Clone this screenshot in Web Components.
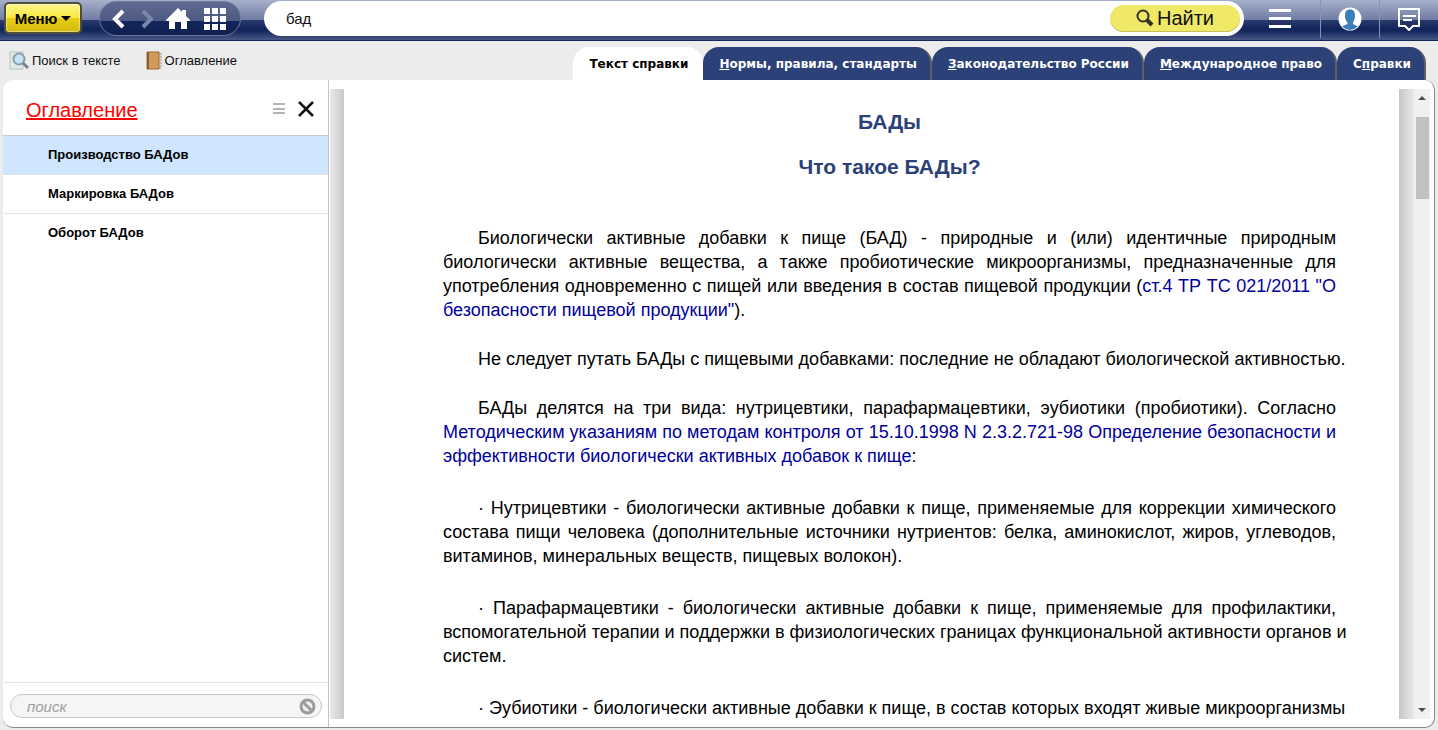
<!DOCTYPE html>
<html lang="ru">
<head>
<meta charset="utf-8">
<title>Оглавление</title>
<style>
html, body { margin: 0; height: 100%; }
body { background: #ececec; font-family: "Liberation Sans", Arial, sans-serif; color: #000; overflow: hidden; }
</style>
</head>
<body>
<help-app></help-app>

<script>
const define = (name, html, init) => {
  const template = document.createElement('template');
  template.innerHTML = html;
  customElements.define(name, class extends HTMLElement {
    constructor() {
      super();
      this.attachShadow({ mode: 'open' }).append(template.content.cloneNode(true));
    }
    connectedCallback() { if (init) init.call(this, this.shadowRoot); }
  });
};

/* Top bar: menu, history buttons, search, account */
define('top-bar', `
<style>
:host { display: flex; align-items: flex-start; height: 40px; flex: none; border-bottom: 1px solid #14265a;
  background: linear-gradient(#a6b0ca 0, #6f7ca3 20px, #2b3b6d 20px, #11245a 29px, #14275c 31px, #4a5885 40px); }
button { font: inherit; border: 0; margin: 0; padding: 0; background: none; display: flex; align-items: center; justify-content: center; }
svg { display: block; }
.menu { box-sizing: border-box; width: 78px; height: 32px; margin: 2px 17px 0 4px; gap: 4px; border: 2px solid #4f4f3c; border-radius: 5px;
  font-size: 15px; font-weight: bold; background: linear-gradient(#fbf48a, #f9ea3c 50%, #e6cf14 50%, #d4b90f); box-shadow: inset 0 0 0 1px #fff6; }
.nav { box-sizing: border-box; display: flex; align-items: center; height: 35px; width: 142px; margin-top: 1px; padding: 0 14px 0 11px;
  justify-content: space-between; border: 1px solid #6c789c; border-radius: 18px; background: linear-gradient(#5e6a90, #4c5982 19px, #14265a 19px, #10214f 100%); }
form { flex: 1; box-sizing: border-box; display: flex; align-items: center; height: 35px; margin: 1px 0 0 23px; padding: 0 4px 0 22px; border-radius: 18px; background: #fff; }
input { flex: 1; min-width: 0; border: 0; outline: 0; padding: 0; background: none; font: 15px "Liberation Sans", Arial, sans-serif; color: #111; }
.find { width: 130px; height: 27px; border-radius: 14px; background: #f0e968; box-shadow: inset 0 -1px #c6bf5c; font-size: 20px; gap: 3px; color: #111; }
.side { width: 59px; height: 38px; border-left: 1px solid #8892b2; flex: none; box-sizing: border-box; }
.side.wide { width: 76px; border: 0; padding-right: 4px; }
</style>
<button class="menu">Меню <svg width="10" height="5"><path d="M0 0h10L5 5z"/></svg></button>
<nav class="nav" aria-label="Навигация">
  <button aria-label="Назад"><svg width="14" height="20" fill="none" stroke="#fff" stroke-width="4"><path d="M12 2L4 10l8 8"/></svg></button>
  <button aria-label="Вперёд"><svg width="14" height="20" fill="none" stroke="#7c86a6" stroke-width="4"><path d="M4 2l8 8-8 8"/></svg></button>
  <button aria-label="Домой"><svg width="24" height="22" fill="#fff"><path d="M12 0l4 4V2h4v6l4 4v1h-3v8h-6v-7H9v7H3v-8H0v-1z"/></svg></button>
  <button aria-label="Разделы"><svg width="22" height="22" fill="#fff"><path d="M0 0h6v6H0zM8 0h6v6H8zM16 0h6v6h-6zM0 8h6v6H0zM8 8h6v6H8zM16 8h6v6h-6zM0 16h6v6H0zM8 16h6v6H8zM16 16h6v6h-6z"/></svg></button>
</nav>
<form role="search" onsubmit="return false">
  <input type="text" value="бад" aria-label="Запрос">
  <button class="find"><svg width="18" height="20" fill="none" stroke="#333322" stroke-width="2"><circle cx="7" cy="7" r="5.5"/><path d="M11 11l5 5" stroke-width="4"/></svg>Найти</button>
</form>
<button class="side wide" aria-label="Список"><svg width="22" height="20" fill="#fff"><path d="M0 0h22v3H0zM0 8h22v3H0zM0 16h22v3H0z"/></svg></button>
<button class="side" aria-label="Профиль"><svg width="24" height="24"><circle cx="12" cy="12" r="11.5" fill="#fff"/><path d="M12 2.500c4 0 5 2.500 5 6.500 0 3-1 5-2 6.500v1.500l5 2.500Q16 23 12 23T4 19.500l5.500-2.500v-1.500C8 14 7 12 7 9c0-4 1-6.500 5-6.500z" fill="#3c7dba"/></svg></button>
<button class="side" aria-label="Сообщения"><svg width="24" height="24" fill="none" stroke="#fff" stroke-width="2"><path d="M2 2h20v17h-6l-4 4-4-4H2z" stroke-linejoin="round"/><path d="M6 9h13M6 13h9"/></svg></button>
`);

/* One document tab */
define('doc-tab', `
<style>
:host { display: block; flex: none; }
button { display: block; box-sizing: border-box; height: 33px; padding: 0 13px 0 16px; border: 0; border-right: 2px solid #5d5f62; border-radius: 16px 16px 0 0;
  background: #2b4178; color: #fff; font: bold 12px/34px "DejaVu Sans", Verdana, sans-serif; white-space: nowrap; }
:host([selected]) button { background: #fff; color: #000; border-right-color: #fff; }
</style>
<button role="tab"><slot></slot></button>
`, function (root) { root.querySelector('button').setAttribute('aria-selected', this.hasAttribute('selected')); });

define('tool-row', `
<style>
:host { display: flex; align-items: flex-end; justify-content: space-between; height: 39px; flex: none; padding: 0 12px 0 9px; }
.tools, .tabs { display: flex; }
.tools { gap: 25px; height: 39px; align-items: center; }
.tools button { display: flex; align-items: center; gap: 3px; padding: 0; border: 0; background: none; font: 13px "Liberation Sans", Arial, sans-serif; color: #111; }
</style>
<div class="tools">
  <button><svg width="20" height="19"><path d="M1 1h13v17H1z" fill="#e2eaec" stroke="#b4c2c6"/><path d="M3 5h4M3 8h3M3 11h3" stroke="#c3cfd2"/><circle cx="10" cy="8" r="5.500" fill="#c5e2f4" stroke="#8f9daa" stroke-width="2"/><path d="M14 12l5 5" stroke="#7d8185" stroke-width="3"/></svg>Поиск в тексте</button>
  <button><svg width="16" height="19"><path d="M12 2h3v15h-3z" fill="#ddd" stroke="#999" stroke-dasharray="2 1"/><path d="M1 1h12v17H1z" fill="#d09a58" stroke="#9c6b35"/><path d="M2 1v17" stroke="#8a5f30" stroke-width="2"/></svg>Оглавление</button>
</div>
<div class="tabs" role="tablist">
  <doc-tab selected>Текст справки</doc-tab>
  <doc-tab><u>Н</u>ормы, правила, стандарты</doc-tab>
  <doc-tab><u>З</u>аконодательство России</doc-tab>
  <doc-tab><u>М</u>еждународное право</doc-tab>
  <doc-tab>С<u>п</u>равки</doc-tab>
</div>
`);

define('toc-panel', `
<style>
:host { display: flex; flex-direction: column; width: 325px; flex: none; border-right: 1px solid #c4c4c4; }
header { display: flex; align-items: center; height: 55px; padding: 0 14px 0 23px; border-bottom: 1px solid #c9ccd0; }
h2 { flex: 1; margin: 0; padding-top: 4px; font-size: 20px; font-weight: normal; line-height: 24px; }
h2 a { color: #f00; }
header button { border: 0; padding: 2px 0 0; background: none; margin-left: 13px; display: flex; }
ul { list-style: none; margin: 0; padding: 0; flex: 1; }
li { border-bottom: 1px solid #e4e4e4; }
li:last-child { border: 0; }
li a { display: block; padding-left: 45px; font-size: 13px; font-weight: bold; line-height: 38px; color: #000; text-decoration: none; }
li.on { background: #cee5fd; }
footer { border-top: 1px solid #e2e2e2; padding: 11px 6px 9px 7px; }
.field { box-sizing: border-box; display: flex; align-items: center; height: 24px; padding: 0 5px 0 16px; border: 1px solid #c8c8c8; border-radius: 12px; background: #f5f5f5; }
input { flex: 1; min-width: 0; border: 0; outline: 0; padding: 0; background: none; font: italic 15px "Liberation Sans", Arial, sans-serif; }
input::placeholder { color: #a0a0a0; opacity: 1; }
.field button { border: 0; padding: 0; background: none; display: flex; }
</style>
<header>
  <h2><a href="#toc">Оглавление</a></h2>
  <button aria-label="Вид списка"><svg width="12" height="12" fill="#b5b5b5"><path d="M0 0h12v2H0zM0 5h12v2H0zM0 9h12v2H0z"/></svg></button>
  <button aria-label="Закрыть"><svg width="16" height="16" stroke="#111" stroke-width="2.500"><path d="M1 1l14 14M15 1L1 15"/></svg></button>
</header>
<ul>
  <li class="on"><a href="#p1">Производство БАДов</a></li>
  <li><a href="#p2">Маркировка БАДов</a></li>
  <li><a href="#p3">Оборот БАДов</a></li>
</ul>
<footer><div class="field">
  <input type="text" placeholder="поиск" aria-label="поиск">
  <button aria-label="Очистить"><svg width="17" height="17"><circle cx="8.500" cy="8.500" r="6.500" fill="#eee" stroke="#9c9c9c" stroke-width="3"/><path d="M4 4l9 9" stroke="#9c9c9c" stroke-width="3"/></svg></button>
</div></footer>
`);

define('scroll-rail', `
<style>
:host { display: flex; flex-direction: column; align-items: center; justify-content: space-between; width: 16px; flex: none; background: #f0f0f0; }
button { border: 0; padding: 0; background: none; width: 16px; height: 18px; display: flex; align-items: center; justify-content: center; }
.track { flex: 1; width: 13px; padding-top: 10px; }
.thumb { height: 14%; background: #c1c1c1; }
</style>
<button aria-label="Вверх"><svg width="8" height="4" fill="#505050"><path d="M0 4h8L4 0z"/></svg></button>
<div class="track"><div class="thumb"></div></div>
<button aria-label="Вниз"><svg width="8" height="4" fill="#505050"><path d="M0 0h8L4 4z"/></svg></button>
`);

define('doc-page', `
<style>
:host { display: flex; flex: 1; min-width: 0; min-height: 0; padding: 9px 4px 8px 1px; }
.shade { width: 14px; flex: none; background: linear-gradient(90deg, #e9e9e9, #c9c9c9); }
.shade.right { width: 15px; background: linear-gradient(90deg, #c6c6c6, #e9e9e9); }
article { flex: 1; min-width: 0; overflow-x: hidden; overflow-y: auto; scrollbar-width: none; padding: 20px 63px 0 99px; box-sizing: border-box; }
::slotted(h1), ::slotted(h3) { margin: 0; color: #2b4178; text-align: center; font-size: 21px; line-height: 25px; }
::slotted(h3) { margin: 20px 0 47px; }
::slotted(p) { margin: 0 0 25px; font-size: 18px; line-height: 24px; text-indent: 35px; text-align: justify; }
::slotted(p.item) { margin: 28px 0; }
</style>
<div class="shade"></div>
<article><slot></slot></article>
<div class="shade right"></div>
<scroll-rail></scroll-rail>
`);

define('help-app', `
<style>
:host { display: flex; flex-direction: column; height: 100vh; }
main { flex: 1; min-height: 0; display: flex; margin: 0 3px 2px; background: #fff; border-radius: 10px; border-right: 1px solid #8a8a8a; border-bottom: 1px solid #8a8a8a; }
doc-page a { color: #00009c; text-decoration: none; }
.keep { white-space: nowrap; }
</style>
<top-bar></top-bar>
<tool-row></tool-row>
<main>
  <toc-panel></toc-panel>
  <doc-page>
    <h1>БАДы</h1>
    <h3>Что такое БАДы?</h3>
    <p>Биологически активные добавки к пище (БАД) - природные и (или) идентичные природным биологически активные вещества, а также пробиотические микроорганизмы, предназначенные для употребления одновременно с пищей или введения в состав пищевой продукции (<a href="#tr">ст.4 ТР ТС 021/2011 "О безопасности пищевой продукции"</a>).</p>
    <p class="keep">Не следует путать БАДы с пищевыми добавками: последние не обладают биологической активностью.</p>
    <p>БАДы делятся на три вида: нутрицевтики, парафармацевтики, эубиотики (пробиотики). Согласно <a href="#mu">Методическим указаниям по методам контроля от 15.10.1998 N 2.3.2.721-98 Определение безопасности и эффективности биологически активных добавок к пище</a>:</p>
    <p class="item">· Нутрицевтики - биологически активные добавки к пище, применяемые для коррекции химического состава пищи человека (дополнительные источники нутриентов: белка, аминокислот, жиров, углеводов, витаминов, минеральных веществ, пищевых волокон).</p>
    <p class="item">· Парафармацевтики - биологически активные добавки к пище, применяемые для профилактики, <span class="keep">вспомогательной терапии и поддержки в физиологических границах функциональной активности органов и</span> систем.</p>
    <p class="item keep">· Эубиотики - биологически активные добавки к пище, в состав которых входят живые микроорганизмы</p>
  </doc-page>
</main>
`);
</script>
</body>
</html>
